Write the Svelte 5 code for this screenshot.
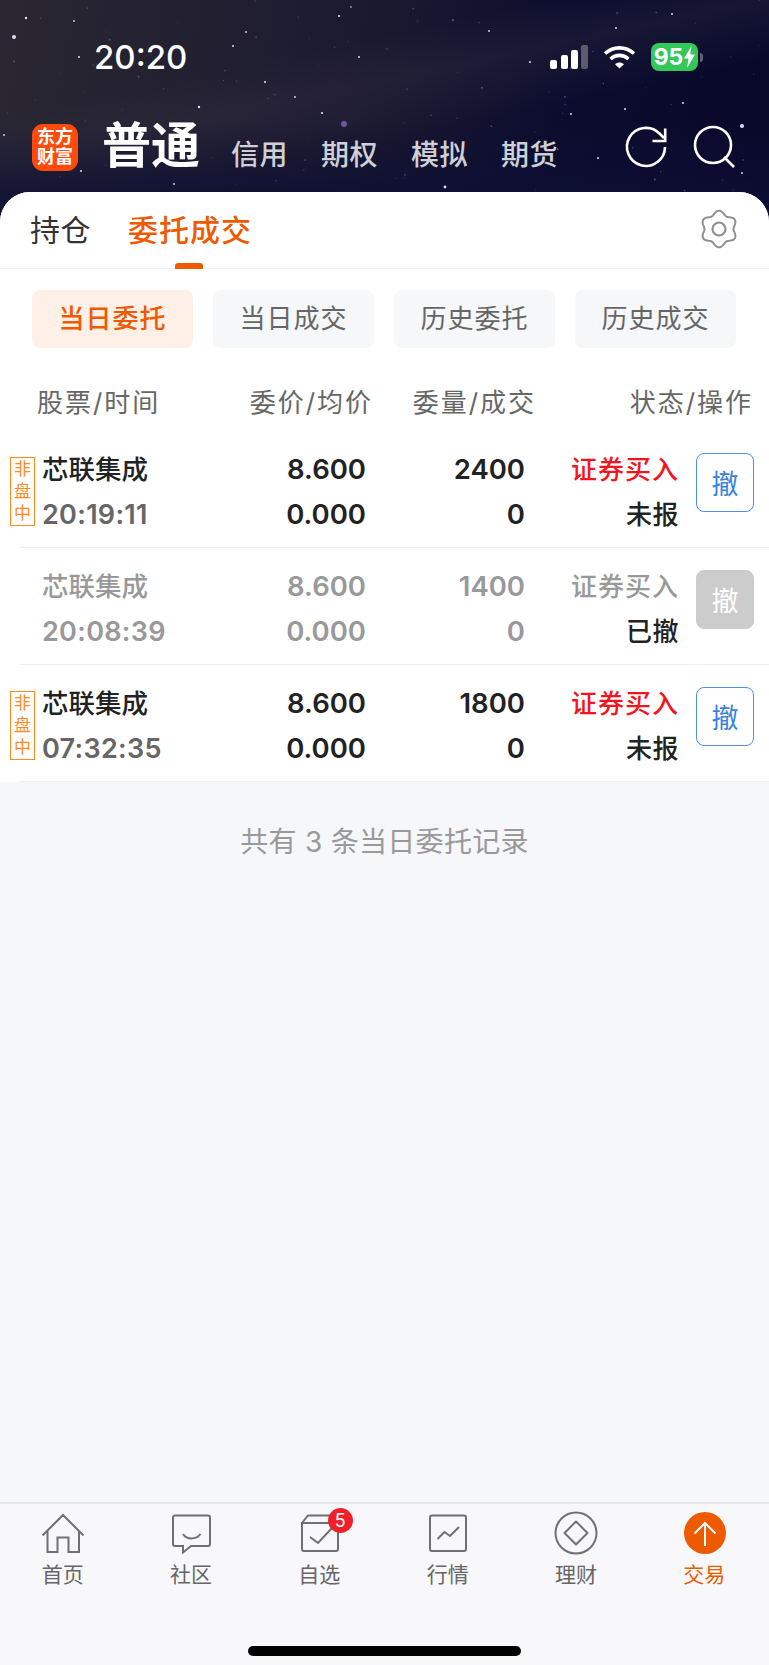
<!--
  App.svelte — brokerage "today's orders" screen.
-->
<script lang="ts">
  const subTabs = ["当日委托", "当日成交", "历史委托", "历史成交"];
  const heads = ["股票/时间", "委价/均价", "委量/成交", "状态/操作"];
  const orders = [
    { name: "芯联集成", time: "20:19:11", price: "8.600", avg: "0.000", qty: "2400", done: "0", side: "证券买入", status: "未报", open: true },
    { name: "芯联集成", time: "20:08:39", price: "8.600", avg: "0.000", qty: "1400", done: "0", side: "证券买入", status: "已撤", open: false },
    { name: "芯联集成", time: "07:32:35", price: "8.600", avg: "0.000", qty: "1800", done: "0", side: "证券买入", status: "未报", open: true },
  ];
  const navs = [
    { label: "首页", icon: "home" },
    { label: "社区", icon: "chat" },
    { label: "自选", icon: "pick", badge: 5 },
    { label: "行情", icon: "chart" },
    { label: "理财", icon: "wealth" },
    { label: "交易", icon: "trade", active: true },
  ];

  // hand-read bright stars, then faint ones from a small LCG
  const bright = [
    [14, 37, 2], [26, 18, 1.2], [79, 57, 1], [74, 21, 0.9], [233, 46, 1], [246, 32, 0.9], [265, 82, 1.1],
    [295, 97, 0.9], [199, 107, 1.2], [322, 113, 1.1], [359, 57, 1], [339, 16, 1.1], [351, 7, 0.8], [489, 31, 0.9],
    [530, 62, 1], [616, 28, 1], [672, 14, 1], [683, 103, 1], [742, 126, 2], [625, 109, 1], [571, 114, 1],
    [598, 158, 1], [445, 187, 1.4], [174, 184, 0.9], [81, 171, 1], [4, 135, 0.9], [742, 173, 0.9], [344, 124, 3],
  ];
  let seed = 17;
  const rnd = () => (seed = (seed * 1103515 + 12345) % 2147483) / 2147483;
  const faint = Array.from({ length: 90 }, () => [rnd() * 769, rnd() * 192, 0.5 + rnd() * 0.6, 0.12 + rnd() * 0.3]);

  // six soft lobes, one pointing straight up
  const gearPath = (() => {
    const pts = [];
    for (let i = 0; i < 120; i++) {
      const a = (i / 120) * Math.PI * 2;
      const r = 16.4 + 1.9 * Math.cos(6 * a);
      pts.push(`${(20 + r * Math.sin(a)).toFixed(2)} ${(20 - r * Math.cos(a)).toFixed(2)}`);
    }
    return `M${pts.join("L")}Z`;
  })();
</script>

<div class="page">
  <header class="hero">
    <svg class="sky" viewBox="0 0 769 222" aria-hidden="true">
      {#each faint as s}
        <circle cx={s[0]} cy={s[1]} r={s[2]} fill="#a9a8e6" opacity={s[3]} />
      {/each}
      {#each bright as s}
        <circle cx={s[0]} cy={s[1]} r={s[2]} fill={s[2] === 3 ? "#6a55a8" : "#dcdcf2"} />
      {/each}
    </svg>

    <div class="status">
      <span class="clock">20:20</span>
      <div class="status-icons">
        <svg class="signal" width="38" height="24" viewBox="0 0 38 24">
          <rect x="0" y="15" width="7" height="9" rx="2" fill="#fff" />
          <rect x="11" y="10" width="7" height="14" rx="2" fill="#fff" />
          <rect x="21" y="5" width="7" height="19" rx="2" fill="#fff" />
          <rect x="31" y="0" width="7" height="24" rx="2" fill="#fff" opacity=".3" />
        </svg>
        <svg class="wifi" width="33" height="24" viewBox="0 0 33 24" fill="none" stroke="#fff">
          <path d="M2 8.5C10.5 1 22.5 1 31 8.5" stroke-width="3.6" />
          <path d="M7.5 14C13 9.2 20 9.2 25.5 14" stroke-width="3.6" />
          <path d="M12 19.2 16.5 23.6 21 19.2C18.4 16.8 14.6 16.8 12 19.2Z" fill="#fff" stroke="none" />
        </svg>
        <div class="battery">
          <span class="level">95</span>
          <svg width="11" height="22" viewBox="0 0 11 22"><path d="M7.5 0 0 12.5H4.5L3 22 11 8.5H6.2Z" fill="#fff" /></svg>
        </div>
        <span class="nub"></span>
      </div>
    </div>

    <div class="brand-row">
      <div class="logo"><span>东方</span><span>财富</span></div>
      <strong class="account">普通</strong>
      <nav class="accounts">
        <span>信用</span><span>期权</span><span>模拟</span><span>期货</span>
      </nav>
      <div class="actions">
        <svg width="48" height="48" viewBox="0 0 48 48" fill="none" stroke="#fff" stroke-width="2.6">
          <path d="M43 24A19 19 0 1 1 37.5 10.5L42 15" />
          <path d="M43.2 5.5V18H30.5" />
        </svg>
        <svg width="48" height="48" viewBox="0 0 48 48" fill="none" stroke="#fff" stroke-width="2.6">
          <circle cx="22" cy="22" r="18" />
          <path d="M33 34 43 44" />
        </svg>
      </div>
    </div>
  </header>

  <main class="sheet">
    <div class="tabs">
      <span class="tab">持仓</span>
      <span class="tab current">委托成交</span>
      <svg class="gear" width="40" height="40" viewBox="0 0 40 40" fill="none" stroke="#8f8f8f" stroke-width="2">
        <path d={gearPath} />
        <circle cx="20" cy="20" r="6.5" stroke-width="2.2" />
      </svg>
    </div>

    <div class="subtabs">
      {#each subTabs as t, i}
        <span class="subtab" class:on={i === 0}>{t}</span>
      {/each}
    </div>

    <div class="thead">
      {#each heads as h}<span>{h}</span>{/each}
    </div>

    <div class="rows">
      {#each orders as o}
        <div class="row" class:cancelled={!o.open}>
          <div class="tag-cell">
            {#if o.open}<span class="tag">非<br />盘<br />中</span>{/if}
          </div>
          <div class="cell left">
            <span class="name">{o.name}</span>
            <span class="time">{o.time}</span>
          </div>
          <div class="cell num">
            <span>{o.price}</span>
            <span>{o.avg}</span>
          </div>
          <div class="cell num">
            <span>{o.qty}</span>
            <span>{o.done}</span>
          </div>
          <div class="cell">
            <span class="side">{o.side}</span>
            <span class="state">{o.status}</span>
          </div>
          <button class="revoke">撤</button>
        </div>
      {/each}
    </div>

    <p class="summary">共有 3 条当日委托记录</p>
  </main>

  <footer class="tabbar">
    <div class="navs">
      {#each navs as n}
        <div class="nav" class:active={n.active}>
          <div class="nav-icon">
            <svg width="48" height="48" viewBox="0 0 48 48" fill="none" stroke="#707070" stroke-width="2">
              {#if n.icon === "home"}
                <path d="M3.5 26.5 24 6 44.5 26.5M8.5 21.5V43H18.5V28.5H29.5V43H40V21.5" />
              {:else if n.icon === "chat"}
                <path d="M8 6.5H41A2 2 0 0 1 43 8.5V35A2 2 0 0 1 41 37H24L16 43.5V37H8A2 2 0 0 1 6 35V8.5A2 2 0 0 1 8 6.5Z" />
                <path d="M16 25C20 31 29 31 33.5 25" />
              {:else if n.icon === "pick"}
                <path d="M6 14V40A2 2 0 0 0 8 42H40A2 2 0 0 0 42 40V14H6ZM6 14 12 6.5H38" />
                <path d="M14 28 22 34 36 19" />
              {:else if n.icon === "chart"}
                <rect x="6" y="6.5" width="36" height="35.5" rx="2" />
                <path d="M13.5 30 20.5 23 26 27 35 18" />
              {:else if n.icon === "wealth"}
                <circle cx="24" cy="24" r="20.5" />
                <path d="M24 12.5 35.5 24 24 35.5 12.5 24Z" stroke-linejoin="round" />
              {:else}
                <circle cx="24" cy="24" r="21" fill="#ee5a00" stroke="none" />
                <path d="M24 14V37M13.5 24.5 24 14 34.5 24.5" stroke="#fff" />
              {/if}
            </svg>
            {#if n.badge}<span class="badge">{n.badge}</span>{/if}
          </div>
          <span class="nav-label">{n.label}</span>
        </div>
      {/each}
    </div>
    <div class="home-bar"></div>
  </footer>
</div>

<style>
  :global(body) {
    margin: 0;
    background: #f6f7f9;
  }

  .page {
    width: 769px;
    height: 1665px;
    display: flex;
    flex-direction: column;
    overflow: hidden;
    font-family: Inter, "Noto Sans CJK SC", sans-serif;
    color: #222;
  }

  /* ── Starry header ─────────────────────────────────────── */
  .hero {
    position: relative;
    height: 222px;
    flex-shrink: 0;
    box-sizing: border-box;
    padding-top: 36px;
    background:
      linear-gradient(180deg, transparent 55%, rgba(12, 14, 52, 0.75) 88%),
      linear-gradient(168deg, transparent 30%, rgba(60, 55, 75, 0.25) 42%, transparent 58%),
      linear-gradient(100deg, #2a2732 0%, #1c1a30 45%, #0c0d2e 72%, #08092a 100%);
  }

  .sky {
    position: absolute;
    inset: 0;
    width: 100%;
    height: 100%;
  }

  .status {
    position: relative;
    display: flex;
    justify-content: space-between;
    align-items: center;
    height: 42px;
    padding: 0 66px 0 94px;
  }

  .clock {
    color: #fff;
    font-size: 33px;
    font-weight: 500;
  }

  .status-icons {
    display: flex;
    align-items: center;
  }

  .signal {
    margin-right: 15px;
  }

  .wifi {
    margin-right: 15px;
  }

  .battery {
    display: flex;
    align-items: center;
    justify-content: center;
    gap: 1px;
    width: 47px;
    height: 28px;
    border-radius: 8px;
    background: #34c759;
  }

  .level {
    color: #fff;
    font-size: 23px;
    font-weight: 700;
  }

  .nub {
    width: 3px;
    height: 9px;
    margin-left: 2px;
    border-radius: 0 3px 3px 0;
    background: rgba(255, 255, 255, 0.35);
  }

  .brand-row {
    position: relative;
    display: flex;
    align-items: center;
    height: 48px;
    margin-top: 45px;
    padding: 0 30px 0 32px;
  }

  .logo {
    display: flex;
    flex-direction: column;
    align-items: center;
    justify-content: center;
    width: 46px;
    height: 47px;
    border-radius: 11px;
    background: #ff4a0c;
    color: #fff;
    font-size: 18px;
    font-weight: 700;
    line-height: 20px;
  }

  .account {
    margin: -2px 0 0 24px;
    color: #fff;
    font-size: 49px;
    font-weight: 700;
    line-height: 48px;
  }

  .accounts {
    display: flex;
    gap: 33px;
    margin-left: 31px;
    padding-top: 12px;
    color: #cfcfd6;
    font-size: 28px;
    font-weight: 500;
    letter-spacing: 0.5px;
  }

  .actions {
    display: flex;
    gap: 21px;
    margin-left: auto;
  }

  /* ── White sheet ───────────────────────────────────────── */
  .sheet {
    position: relative;
    flex: 1;
    margin-top: -30px;
    border-radius: 30px 30px 0 0;
    background: #f6f7f9;
    overflow: hidden;
  }

  .tabs {
    display: flex;
    align-items: center;
    gap: 37px;
    height: 77px;
    padding: 0 30px;
    border-bottom: 1px solid #f0f0f0;
    background: #fff;
    box-sizing: border-box;
  }

  .tab {
    position: relative;
    font-size: 30px;
    line-height: 77px;
    color: #333;
    letter-spacing: 0.5px;
  }

  .tab.current {
    color: #ee5a00;
    font-weight: 500;
    letter-spacing: 1px;
  }

  .tab.current::after {
    content: "";
    position: absolute;
    left: 47px;
    bottom: 0;
    width: 28px;
    height: 6px;
    border-radius: 3px 3px 0 0;
    background: #ee5a00;
  }

  .gear {
    margin-left: auto;
    margin-right: 0;
    margin-top: -2px;
  }

  .subtabs {
    display: flex;
    gap: 20px;
    padding: 21px 33px 25px 32px;
    background: #fff;
  }

  .subtab {
    width: 161px;
    height: 58px;
    line-height: 58px;
    text-align: center;
    border-radius: 8px;
    background: #f6f7f9;
    color: #666;
    font-size: 26px;
    letter-spacing: 1px;
  }

  .subtab.on {
    background: #feefe7;
    color: #ee5a00;
    font-weight: 500;
  }

  .thead {
    display: grid;
    grid-template-columns: 204px 132px 163px 217px;
    align-items: center;
    height: 54px;
    padding: 0 0 4px 37px;
    background: #fff;
    color: #666;
    font-size: 26px;
    letter-spacing: 2px;
  }

  .thead span:not(:first-child) {
    text-align: right;
  }

  .rows {
    background: #fff;
  }

  .row {
    position: relative;
    display: grid;
    grid-template-columns: 32px 184px 140px 159px 154px 58px;
    align-items: center;
    height: 117px;
    padding: 4px 0 0 10px;
    box-sizing: border-box;
  }

  .row::after {
    content: "";
    position: absolute;
    left: 20px;
    right: 0;
    bottom: 0;
    height: 1px;
    background: #eeeeee;
  }

  .tag-cell {
    align-self: center;
  }

  .tag {
    display: block;
    box-sizing: border-box;
    width: 25px;
    height: 69px;
    border: 1px solid #ff8a1f;
    color: #ff8a1f;
    font-size: 17px;
    line-height: 22px;
    text-align: center;
  }

  .cell {
    display: flex;
    flex-direction: column;
    align-items: flex-end;
    font-size: 28px;
    font-weight: 500;
    line-height: 45px;
    color: #222;
  }

  .cell.num {
    font-size: 27.5px;
    font-weight: 600;
  }

  .cell.left {
    align-items: flex-start;
    font-size: 26.5px;
  }

  .time {
    color: #666;
    font-size: 27px;
    font-weight: 600;
    letter-spacing: 0.3px;
  }

  .side {
    color: #f5141e;
    font-size: 26px;
    letter-spacing: 1px;
  }

  .state {
    font-size: 26px;
    letter-spacing: 0.5px;
  }

  .revoke {
    width: 58px;
    height: 59px;
    margin: 0 0 18px 17px;
    padding: 0;
    border: 1px solid #4a90e8;
    border-radius: 8px;
    background: #fff;
    color: #3a82e0;
    font-family: inherit;
    font-size: 27px;
  }

  .row.cancelled .cell span,
  .row.cancelled .time {
    color: #999;
  }

  .row.cancelled .cell .state {
    color: #222;
  }

  .row.cancelled .revoke {
    border-color: #ccc;
    background: #ccc;
    color: #fff;
  }

  .summary {
    margin: 40px 0 0;
    text-align: center;
    color: #999;
    font-size: 28px;
    line-height: 40px;
    letter-spacing: 0.3px;
  }

  /* ── Tab bar ───────────────────────────────────────────── */
  .tabbar {
    flex-shrink: 0;
    height: 163px;
    box-sizing: border-box;
    border-top: 2px solid #e8e8ea;
    background: #f8f8fa;
  }

  .navs {
    display: grid;
    grid-template-columns: repeat(6, 1fr);
    margin-left: -1px;
    padding-top: 5px;
  }

  .nav {
    display: flex;
    flex-direction: column;
    align-items: center;
  }

  .nav-icon {
    position: relative;
    height: 48px;
  }

  .nav-label {
    margin: 1px 0 0 -1px;
    color: #666;
    font-size: 21px;
    line-height: 34px;
  }

  .nav.active .nav-label {
    color: #ee5a00;
  }

  .badge {
    position: absolute;
    top: -1px;
    right: -9px;
    width: 25px;
    height: 25px;
    border-radius: 50%;
    background: #f0202a;
    color: #fff;
    font-size: 18px;
    line-height: 25px;
    text-align: center;
  }

  .home-bar {
    width: 273px;
    height: 10px;
    margin: 54px auto 0;
    border-radius: 5px;
    background: #000;
  }
</style>
